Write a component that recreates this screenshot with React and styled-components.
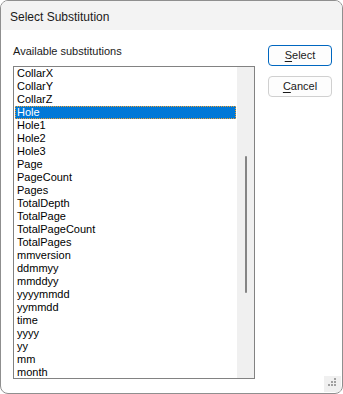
import React from 'react';
import styled, { createGlobalStyle } from 'styled-components';

const GlobalStyle = createGlobalStyle`
    html, body {
        margin: 0;
        padding: 0;
        background: #ffffff;
    }
    * {
        box-sizing: border-box;
    }
`

const Window = styled.div`
    width: 343px;
    height: 394px;
    border: 1px solid #8f8f8f;
    border-radius: 8px;
    overflow: hidden;
    display: flex;
    flex-direction: column;
    background: #ffffff;
    font-family: "Liberation Sans", Arial, sans-serif;
    font-size: 11px;
    color: #1a1a1a;
    position: relative;
`

const TitleBar = styled.div`
    height: 29px;
    flex: none;
    background: #f3f3f3;
    display: flex;
    align-items: center;
    padding-left: 9px;
    padding-top: 2px;
    font-size: 12px;
`

const Body = styled.div`
    flex: 1;
    display: flex;
    padding: 14px 0 0 12px;
`

const LeftColumn = styled.div`
    display: flex;
    flex-direction: column;
`

const Label = styled.div`
    height: 22px;
    line-height: 15px;
`

const ListBox = styled.div`
    width: 242px;
    height: 313px;
    border: 1px solid #828282;
    display: flex;
    overflow: hidden;
`

const Items = styled.div`
    flex: 1;
    padding: 0 1px;
`

const Item = styled.div`
    height: 13px;
    line-height: 13px;
    padding-left: 2px;
    white-space: nowrap;
    color: ${p => (p.$selected ? '#ffffff' : '#000000')};
    background: ${p => (p.$selected ? '#0078d7' : 'transparent')};
    outline: ${p => (p.$selected ? '1px dotted #f0a030' : 'none')};
    outline-offset: -1px;
`

const ScrollTrack = styled.div`
    width: 17px;
    flex: none;
    background: #f0f0f0;
    display: flex;
    justify-content: center;
    padding-top: 89px;
`

const ScrollThumb = styled.div`
    width: 2px;
    height: 137px;
    border-radius: 1px;
    background: #858585;
`

const ButtonColumn = styled.div`
    display: flex;
    flex-direction: column;
    gap: 10px;
    margin-left: 13px;
    padding-top: 1px;
`

const Button = styled.button`
    width: 64px;
    height: 21px;
    border-radius: 4px;
    border: 1px solid ${p => (p.$primary ? '#0067c0' : '#d0d0d0')};
    background: #fdfdfd;
    font-family: inherit;
    font-size: 11px;
    color: #1a1a1a;
    padding: 0;
    line-height: 17px;

    u {
        text-decoration-thickness: 1px;
        text-underline-offset: 2px;
    }
`

const Grip = styled.div`
    position: absolute;
    right: 1px;
    bottom: 1px;
    width: 17px;
    height: 16px;
    background: #f0f0f0;
`

const items = [
    'CollarX', 'CollarY', 'CollarZ', 'Hole', 'Hole1', 'Hole2', 'Hole3',
    'Page', 'PageCount', 'Pages', 'TotalDepth', 'TotalPage', 'TotalPageCount',
    'TotalPages', 'mmversion', 'ddmmyy', 'mmddyy', 'yyyymmdd', 'yymmdd',
    'time', 'yyyy', 'yy', 'mm', 'month',
]

const gripDots = [[10, 2], [7, 5], [10, 5], [4, 8], [7, 8], [10, 8]]

export default function App() {
    return (
        <Window>
            <GlobalStyle />
            <TitleBar>Select Substitution</TitleBar>
            <Body>
                <LeftColumn>
                    <Label>Available substitutions</Label>
                    <ListBox>
                        <Items>
                            {items.map(name => (
                                <Item key={name} $selected={name === 'Hole'}>{name}</Item>
                            ))}
                        </Items>
                        <ScrollTrack>
                            <ScrollThumb />
                        </ScrollTrack>
                    </ListBox>
                </LeftColumn>
                <ButtonColumn>
                    <Button $primary><u>S</u>elect</Button>
                    <Button><u>C</u>ancel</Button>
                </ButtonColumn>
            </Body>
            <Grip>
                <svg width="17" height="16" viewBox="0 0 17 16">
                    {gripDots.map(([x, y]) => (
                        <rect key={`${x}-${y}`} x={x} y={y} width="2" height="2" fill="#a0a0a0" />
                    ))}
                </svg>
            </Grip>
        </Window>
    );
}
